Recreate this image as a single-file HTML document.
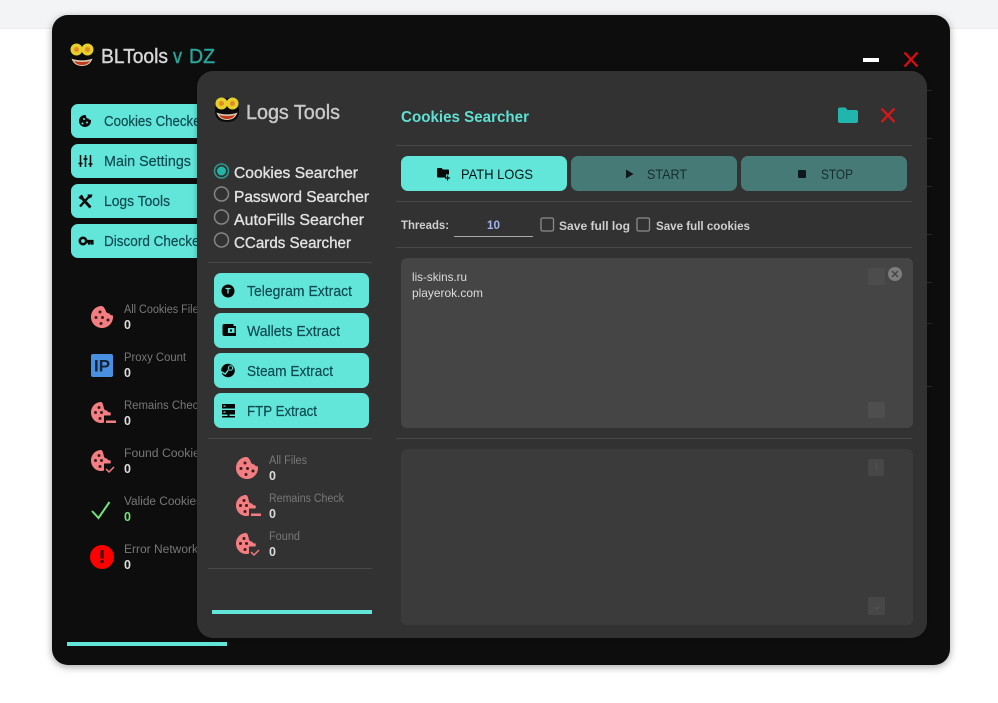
<!DOCTYPE html>
<html lang="en">
<head>
<meta charset="utf-8">
<title>BLTools</title>
<style>
html,body{margin:0;padding:0;background:#fff;width:998px;height:703px;overflow:hidden}
svg{display:block;filter:blur(.3px)}
text{font-family:"Liberation Sans",sans-serif}
.lb{fill:#0f4a50;font-size:14.5px;stroke:#0f4a50;stroke-width:.2px}
.rd{fill:#e2e2e2;font-size:16px;stroke:#e2e2e2;stroke-width:.35px}
.st{fill:#787878;font-size:11.5px}
.vl{fill:#dcdcdc;font-size:12.5px;font-weight:700}
.sm{fill:#cfcfcf;font-size:12px;font-weight:700}
.hd{stroke-width:.4px}
</style>
</head>
<body>
<svg width="998" height="703" viewBox="0 0 998 703" xmlns="http://www.w3.org/2000/svg">
<defs>
<filter id="sh" x="-10%" y="-10%" width="120%" height="120%"><feDropShadow dx="0" dy="2" stdDeviation="4" flood-color="#000" flood-opacity=".35"/></filter>
<filter id="sh2" x="-10%" y="-10%" width="120%" height="120%"><feDropShadow dx="0" dy="0" stdDeviation="3" flood-color="#000" flood-opacity=".3"/></filter>
<g id="cookie">
<path d="M10.500 0C4.700 0 0 4.900 0 11s4.900 11 11 11 11-4.900 11-11c0-.7-.1-1.200-.2-1.800-1.500.3-3-.4-3.500-1.900-1.900.3-3.600-1.100-3.600-3C13.700 3 13 .3 10.500 0z" fill="#f27e82"/>
<circle cx="9" cy="6" r="1.500" fill="#3a1c1e"/><circle cx="5" cy="11.500" r="1.500" fill="#3a1c1e"/><circle cx="11.500" cy="11.500" r="1.500" fill="#3a1c1e"/><circle cx="17" cy="14" r="1.500" fill="#3a1c1e"/><circle cx="10" cy="17.500" r="1.500" fill="#3a1c1e"/>
</g>
<g id="cookiecut">
<path d="M10 0C4.500 0 0 4.700 0 10.500S4.500 21 10 21c1.200 0 2.200-.2 3-.5V13.500h6.500c.3-1 .3-2 .2-3-1.600 0-3-.5-3.700-2-1.800.2-3.300-1.300-3.300-3.500C12 3 12 .5 10 0z" fill="#f27e82"/>
<circle cx="8" cy="5.500" r="1.500" fill="#3a1c1e"/><circle cx="4.500" cy="10.500" r="1.500" fill="#3a1c1e"/><circle cx="10.500" cy="10.500" r="1.500" fill="#3a1c1e"/><circle cx="9" cy="16.500" r="1.500" fill="#3a1c1e"/>
</g>
<g id="face">
<path d="M1 14C1 6 5 1 13 1s12 5 12 13-5 11-12 11S1 22 1 14z" fill="#0b0b0b"/>
<circle cx="7.500" cy="6.500" r="6" fill="#e6cf2a"/><circle cx="18.500" cy="6.500" r="6" fill="#e6cf2a"/>
<circle cx="7.500" cy="6.500" r="2.500" fill="#e28a26"/><circle cx="18.500" cy="6.500" r="2.500" fill="#e28a26"/>
<path d="M2.500 15.500c6 2.500 15 2.500 21 0-1.500 5-5.500 7.500-10.500 7.500S4 20.500 2.500 15.500z" fill="#d8c8b0"/>
<path d="M5 18c5 1.300 11 1.300 16 0-2 3-4.500 4-8 4s-6-1-8-4z" fill="#c23a18"/>
</g>
</defs>

<rect x="0" y="0" width="998" height="28" fill="#f3f4f6"/>
<rect x="0" y="28" width="998" height="1" fill="#ececee"/>

<rect x="52" y="15" width="898" height="650" rx="16" fill="#101010" filter="url(#sh)"/>

<use href="#face" x="69" y="43"/>
<text x="101" y="63" font-size="20" fill="#d6d6d6" stroke="#d6d6d6" class="hd" textLength="67" lengthAdjust="spacingAndGlyphs">BLTools</text>
<text x="173" y="63" font-size="20" fill="#26a69a" stroke="#26a69a" class="hd" textLength="9" lengthAdjust="spacingAndGlyphs">v</text>
<text x="189" y="63" font-size="20" fill="#26a69a" stroke="#26a69a" class="hd" textLength="26" lengthAdjust="spacingAndGlyphs">DZ</text>

<rect x="863" y="58" width="16" height="4" fill="#fff"/>
<path d="M904.500 52.500l13 14M917.500 52.500l-13 14" stroke="#e00d0d" stroke-width="2.200" fill="none"/>

<rect x="71" y="104" width="140" height="34" rx="7" fill="#62e6da"/>
<rect x="71" y="144" width="140" height="34" rx="7" fill="#62e6da"/>
<rect x="71" y="184" width="140" height="34" rx="7" fill="#62e6da"/>
<rect x="71" y="224" width="140" height="34" rx="7" fill="#62e6da"/>

<path d="M85 115c-3.500 0-6 2.700-6 6s2.700 6 6 6 6-2.700 6-6c0-.6-.1-.8-.2-1.200-1 .2-2-.3-2.300-1.300-1.200.2-2.400-.7-2.400-2C86 116 86 115 85 115z" fill="#0b0b0b"/>
<circle cx="84" cy="119" r="1" fill="#62e6da"/><circle cx="87" cy="122.500" r="1" fill="#62e6da"/><circle cx="82.500" cy="123.500" r="1" fill="#62e6da"/>
<path d="M80.500 155v12M85.500 155v12M90.500 155v12M78.500 163.500h4M83.500 159h4M88.500 164h4" stroke="#0b0b0b" stroke-width="1.500" fill="none"/>
<path d="M81 197l9.500 10.500" stroke="#0b0b0b" stroke-width="2.800" fill="none"/>
<path d="M90 195.500l-10 11" stroke="#0b0b0b" stroke-width="2.400" fill="none"/>
<path d="M78.500 197.500l3-3 2 2-3 3zM87.500 194.500l5 0-1 3-3 1z" fill="#0b0b0b"/>
<circle cx="83" cy="241" r="3.200" fill="none" stroke="#0b0b0b" stroke-width="2.600"/>
<path d="M86 240.500h7v3.500h-2v-2h-1.500v2H88" stroke="#0b0b0b" stroke-width="1.200" fill="#0b0b0b"/>

<text x="104" y="126" class="lb" textLength="101" lengthAdjust="spacingAndGlyphs">Cookies Checker</text>
<text x="104" y="166" class="lb" textLength="87" lengthAdjust="spacingAndGlyphs">Main Settings</text>
<text x="104" y="206" class="lb" textLength="66" lengthAdjust="spacingAndGlyphs">Logs Tools</text>
<text x="104" y="246" class="lb" textLength="100" lengthAdjust="spacingAndGlyphs">Discord Checker</text>

<use href="#cookie" x="91" y="306"/>
<rect x="91" y="354" width="22" height="23" rx="2" fill="#4a90e2"/>
<text x="102" y="371.500" font-size="17" font-weight="700" fill="#12233a" text-anchor="middle">IP</text>
<use href="#cookiecut" x="91" y="402"/>
<rect x="106" y="420.500" width="10" height="2.500" fill="#f27e82"/>
<use href="#cookiecut" x="91" y="450"/>
<path d="M106 469l3 3 5-5" stroke="#f27e82" stroke-width="1.500" fill="none"/>
<path d="M92 511l6.500 7 11-16" stroke="#73e27a" stroke-width="2" fill="none"/>
<circle cx="102" cy="557" r="12" fill="#f00"/>
<rect x="100.500" y="550" width="3" height="8.500" fill="#3a0000"/><rect x="100.500" y="560" width="3" height="3" fill="#3a0000"/>

<text x="124" y="313" class="st" textLength="80" lengthAdjust="spacingAndGlyphs">All Cookies Files</text>
<text x="124" y="329" class="vl">0</text>
<text x="124" y="361" class="st" textLength="62" lengthAdjust="spacingAndGlyphs">Proxy Count</text>
<text x="124" y="377" class="vl">0</text>
<text x="124" y="409" class="st" textLength="80" lengthAdjust="spacingAndGlyphs">Remains Check</text>
<text x="124" y="425" class="vl">0</text>
<text x="124" y="457" class="st" textLength="82" lengthAdjust="spacingAndGlyphs">Found Cookies</text>
<text x="124" y="473" class="vl">0</text>
<text x="124" y="505" class="st" textLength="78" lengthAdjust="spacingAndGlyphs">Valide Cookies</text>
<text x="124" y="521" fill="#73e27a" font-size="12.500" font-weight="700">0</text>
<text x="124" y="553" class="st" textLength="80" lengthAdjust="spacingAndGlyphs">Error Networks</text>
<text x="124" y="569" class="vl">0</text>

<rect x="67" y="642" width="160" height="4" fill="#62e6da"/>

<g stroke="#2a2a2a" stroke-width="1">
<path d="M927 90.500h5M927 138.500h5M927 186.500h5M927 234.500h5M927 282.500h5M927 323.500h5M927 386.500h5"/>
</g>

<rect x="197" y="71" width="730" height="567" rx="16" fill="#323232" filter="url(#sh2)"/>

<use href="#face" x="214" y="97"/>
<text x="246" y="119" font-size="20" fill="#c8c8c8" stroke="#c8c8c8" class="hd" textLength="94" lengthAdjust="spacingAndGlyphs">Logs Tools</text>

<circle cx="221.500" cy="171" r="7" fill="none" stroke="#2a9c90" stroke-width="1.500"/><circle cx="221.500" cy="171" r="4.500" fill="#22b5a5"/>
<circle cx="221.500" cy="194" r="7" fill="none" stroke="#858585" stroke-width="1.500"/>
<circle cx="221.500" cy="217" r="7" fill="none" stroke="#858585" stroke-width="1.500"/>
<circle cx="221.500" cy="240" r="7" fill="none" stroke="#858585" stroke-width="1.500"/>
<text x="234" y="178" class="rd" textLength="124" lengthAdjust="spacingAndGlyphs">Cookies Searcher</text>
<text x="234" y="202" class="rd" textLength="135" lengthAdjust="spacingAndGlyphs">Password Searcher</text>
<text x="234" y="225" class="rd" textLength="130" lengthAdjust="spacingAndGlyphs">AutoFills Searcher</text>
<text x="234" y="248" class="rd" textLength="117" lengthAdjust="spacingAndGlyphs">CCards Searcher</text>

<g fill="#4a4a4a">
<rect x="208" y="262" width="164" height="1"/>
<rect x="208" y="438" width="164" height="1"/>
<rect x="208" y="568" width="164" height="1"/>
<rect x="396" y="145" width="516" height="1"/>
<rect x="396" y="201" width="516" height="1"/>
<rect x="396" y="247" width="516" height="1"/>
<rect x="396" y="438" width="516" height="1"/>
</g>

<rect x="214" y="273" width="155" height="35" rx="7" fill="#62e6da"/>
<rect x="214" y="313" width="155" height="35" rx="7" fill="#62e6da"/>
<rect x="214" y="353" width="155" height="35" rx="7" fill="#62e6da"/>
<rect x="214" y="393" width="155" height="35" rx="7" fill="#62e6da"/>

<circle cx="228" cy="291" r="6.500" fill="#060606"/>
<path d="M225.500 288.500h5M228 288.500v5" stroke="#62e6da" stroke-width="1.300" fill="none"/>
<path d="M222.500 326a2 2 0 0 1 2-2h9v2h2.500v10h-11.500a2 2 0 0 1-2-2z" fill="#060606"/>
<rect x="228" y="328" width="6.500" height="5" fill="#62e6da"/><rect x="230" y="329.500" width="2" height="2" fill="#060606"/>
<circle cx="228" cy="370.500" r="6.800" fill="#060606"/>
<circle cx="230.500" cy="368" r="2.200" fill="none" stroke="#62e6da" stroke-width="1"/>
<path d="M220.800 371.500l4.500 2.500 3-4" stroke="#62e6da" stroke-width="1.300" fill="none"/>
<rect x="222" y="404" width="13" height="4.500" fill="#060606"/><rect x="222" y="410" width="13" height="4.500" fill="#060606"/>
<rect x="223.500" y="405.500" width="2" height="1.200" fill="#62e6da"/><rect x="223.500" y="411.500" width="2" height="1.200" fill="#62e6da"/>
<rect x="227.500" y="414" width="2" height="3" fill="#060606"/><rect x="222" y="416" width="13" height="1.500" fill="#060606"/>

<text x="247" y="296" class="lb" textLength="105" lengthAdjust="spacingAndGlyphs">Telegram Extract</text>
<text x="247" y="336" class="lb" textLength="93" lengthAdjust="spacingAndGlyphs">Wallets Extract</text>
<text x="247" y="376" class="lb" textLength="86" lengthAdjust="spacingAndGlyphs">Steam Extract</text>
<text x="247" y="416" class="lb" textLength="70" lengthAdjust="spacingAndGlyphs">FTP Extract</text>

<use href="#cookie" x="236" y="457"/>
<use href="#cookiecut" x="236" y="495"/>
<rect x="251" y="513.500" width="10" height="2.500" fill="#f27e82"/>
<use href="#cookiecut" x="236" y="533"/>
<path d="M251 552l3 3 5-5" stroke="#f27e82" stroke-width="1.500" fill="none"/>

<text x="269" y="464" class="st" textLength="38" lengthAdjust="spacingAndGlyphs">All Files</text>
<text x="269" y="480" class="vl">0</text>
<text x="269" y="502" class="st" textLength="75" lengthAdjust="spacingAndGlyphs">Remains Check</text>
<text x="269" y="518" class="vl">0</text>
<text x="269" y="540" class="st" textLength="31" lengthAdjust="spacingAndGlyphs">Found</text>
<text x="269" y="556" class="vl">0</text>

<rect x="212" y="610" width="160" height="4" fill="#62e6da"/>

<text x="401" y="122" font-size="15.500" font-weight="700" fill="#5fe0d2" textLength="128" lengthAdjust="spacingAndGlyphs">Cookies Searcher</text>
<path d="M838 109.500a2 2 0 0 1 2-2h5.500l2 2.500h8.500a2 2 0 0 1 2 2v9a2 2 0 0 1-2 2h-16a2 2 0 0 1-2-2z" fill="#22b5ae"/>
<path d="M881.500 108.500l13 13.500M894.500 108.500l-13 13.500" stroke="#e01515" stroke-width="2.200" fill="none"/>

<rect x="401" y="156" width="166" height="35" rx="7" fill="#62e6da"/>
<rect x="571" y="156" width="166" height="35" rx="7" fill="#457a76"/>
<rect x="741" y="156" width="166" height="35" rx="7" fill="#457a76"/>
<path d="M437 169a1 1 0 0 1 1-1h3.500l1.500 1.500h5a1 1 0 0 1 1 1v4h-3v3h-8a1 1 0 0 1-1-1z" fill="#0a0a0a"/>
<path d="M447.500 175.500v5M445 178h5" stroke="#0a0a0a" stroke-width="1.300" fill="none"/>
<text x="461" y="179" font-size="14" fill="#0d1414" textLength="72" lengthAdjust="spacingAndGlyphs">PATH LOGS</text>
<path d="M626 169.500l7.500 4.500-7.500 4.500z" fill="#10181c"/>
<text x="647" y="179" font-size="14" fill="#1a2c30" textLength="40" lengthAdjust="spacingAndGlyphs">START</text>
<rect x="798" y="170" width="8" height="8" rx="1" fill="#10181c"/>
<text x="821" y="179" font-size="14" fill="#1a2c30" textLength="32" lengthAdjust="spacingAndGlyphs">STOP</text>

<text x="401" y="229" class="sm" textLength="48" lengthAdjust="spacingAndGlyphs">Threads:</text>
<text x="487" y="229" font-size="12" font-weight="700" fill="#a3b5ec" textLength="13" lengthAdjust="spacingAndGlyphs">10</text>
<rect x="454" y="236" width="79" height="1" fill="#a8a8a8"/>
<rect x="541" y="218" width="12.500" height="13" rx="1.500" fill="none" stroke="#8a8a8a" stroke-width="1.300"/>
<text x="559" y="230" class="sm" textLength="71" lengthAdjust="spacingAndGlyphs">Save full log</text>
<rect x="637" y="218" width="12.500" height="13" rx="1.500" fill="none" stroke="#8a8a8a" stroke-width="1.300"/>
<text x="656" y="230" class="sm" textLength="94" lengthAdjust="spacingAndGlyphs">Save full cookies</text>

<rect x="401" y="258" width="512" height="170" rx="6" fill="#454545"/>
<text x="412" y="281" font-size="12" fill="#dcdcdc" textLength="55" lengthAdjust="spacingAndGlyphs">lis-skins.ru</text>
<text x="412" y="297" font-size="12" fill="#dcdcdc" textLength="71" lengthAdjust="spacingAndGlyphs">playerok.com</text>
<rect x="868" y="268" width="17" height="17" rx="1" fill="#4c4c4c"/>
<circle cx="895" cy="274" r="7" fill="#7d7d7d"/>
<path d="M892 271l6 6M898 271l-6 6" stroke="#454545" stroke-width="1.500" fill="none"/>
<rect x="868" y="402" width="17" height="16" rx="1" fill="#4e4e4e"/>

<rect x="401" y="449" width="512" height="176" rx="6" fill="#3b3b3b"/>
<rect x="868" y="459" width="16" height="17" rx="1" fill="#474747"/>
<rect x="876" y="463" width="1" height="7" fill="#555"/>
<rect x="868" y="597" width="17" height="18" rx="1" fill="#474747"/>
<path d="M875 607l2 2 2-3" stroke="#585858" stroke-width="1" fill="none"/>
</svg>
</body>
</html>
